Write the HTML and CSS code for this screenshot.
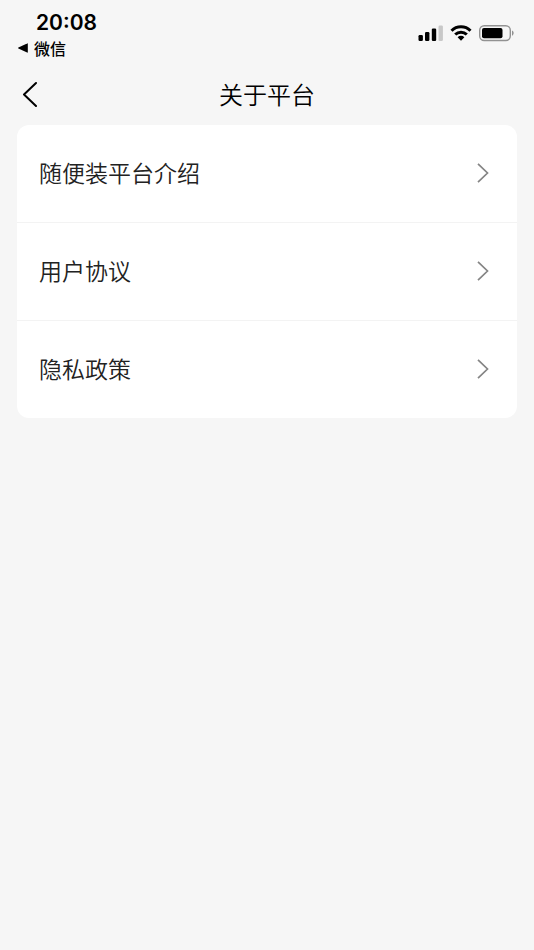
FILE: index.html
```html
<!DOCTYPE html>
<html lang="zh-CN">
<head>
<meta charset="utf-8">
<meta name="viewport" content="width=device-width, initial-scale=1">
<title>关于平台</title>
<link rel="stylesheet" href="styles.css">
</head>
<body>
<div class="status">
  <div class="status-left">
    <time class="clock">20:08</time>
    <a class="return" href="#"><svg width="10" height="10" viewBox="0 0 10 10" aria-hidden="true"><path d="M9.800.8v8.400a.5.5 0 0 1-.7.4L.4 5.400a.5.5 0 0 1 0-.8L9.100.4a.5.5 0 0 1 .7.4z"/></svg>微信</a>
  </div>
  <div class="status-icons">
    <svg width="26" height="18" viewBox="0 0 26 18" aria-hidden="true">
      <rect x=".5" y="11" width="4.400" height="6" rx="1.200"/>
      <rect x="7" y="8" width="4.400" height="9" rx="1.200"/>
      <rect x="13.800" y="4.500" width="4.400" height="12.500" rx="1.200"/>
      <rect x="20.500" y="1.500" width="4.400" height="15.500" rx="1.200" fill="#c8c8c8"/>
    </svg>
    <svg width="22" height="18" viewBox="0 0 22 18" fill="none" stroke="#000" stroke-width="3" aria-hidden="true">
      <path d="M1.500 6.700a13.600 13.600 0 0 1 19 0"/>
      <path d="M5.200 10.500a8.300 8.300 0 0 1 11.600 0"/>
      <path d="M7.600 13.200a4.900 4.900 0 0 1 6.800 0L11 16.700z" fill="#000" stroke="none"/>
    </svg>
    <svg width="36" height="18" viewBox="0 0 36 18" aria-hidden="true">
      <rect x="1.700" y="1.700" width="30.600" height="14.800" rx="4.500" fill="none" stroke="#929292" stroke-width="1.400"/>
      <rect x="4" y="4" width="20.500" height="10.200" rx="2"/>
      <path d="M34 6.500c2.200.8 2.200 4.400 0 5.200z" fill="#929292"/>
    </svg>
  </div>
</div>
<header class="nav">
  <button class="back" type="button" aria-label="返回"><svg width="16" height="26" viewBox="0 0 16 26" aria-hidden="true"><path d="M14 2 2 13.500l12 11.500"/></svg></button>
  <h1 class="title">关于平台</h1>
</header>
<main>
  <nav class="card">
    <a class="row" href="#">随便装平台介绍<svg class="chevron" width="12" height="20" viewBox="0 0 12 20" aria-hidden="true"><path d="M1 .8 10.500 10 1 19.200"/></svg></a>
    <a class="row" href="#">用户协议<svg class="chevron" width="12" height="20" viewBox="0 0 12 20" aria-hidden="true"><path d="M1 .8 10.500 10 1 19.200"/></svg></a>
    <a class="row" href="#">隐私政策<svg class="chevron" width="12" height="20" viewBox="0 0 12 20" aria-hidden="true"><path d="M1 .8 10.500 10 1 19.200"/></svg></a>
  </nav>
</main>
</body>
</html>
```
FILE: styles.css
```css
* {
  box-sizing: border-box;
}

body {
  margin: 0;
  min-height: 100vh;
  background: #f6f6f6;
  color: #000;
  font-family: "Noto Sans CJK SC", sans-serif;
}

a {
  color: inherit;
  text-decoration: none;
}

svg {
  display: block;
  flex: none;
}

.status {
  display: flex;
  justify-content: space-between;
  padding: 10px 20px 0 18px;
}

.clock {
  display: block;
  padding-left: 18px;
  font: 600 21px/26px Inter, sans-serif;
}

.return {
  display: flex;
  align-items: center;
  gap: 6px;
  font-size: 16px;
  font-weight: 500;
  line-height: 24px;
}

.status-icons {
  display: flex;
  gap: 6px;
  padding-top: 14px;
}

.nav {
  display: grid;
  grid-template-columns: 48px 1fr 48px;
  align-items: center;
  padding: 13px 18px 10px;
}

.back {
  width: 48px;
  padding: 8px 4px;
  border: 0;
  background: none;
}

.back path {
  fill: none;
  stroke: #000;
  stroke-width: 2;
  stroke-linecap: round;
  stroke-linejoin: round;
}

.title {
  margin: 0;
  font-size: 24px;
  font-weight: 350;
  line-height: 36px;
  text-align: center;
}

.card {
  margin: 0 17px;
  overflow: hidden;
  border-radius: 12px;
  background: #fff;
}

.row {
  display: flex;
  align-items: center;
  justify-content: space-between;
  padding: 30px 28px 32px 22px;
  color: #222;
  font-size: 23px;
  font-weight: 350;
  line-height: 35px;
}

.row + .row {
  border-top: 1px solid #f3f3f3;
}

.chevron path {
  fill: none;
  stroke: #858585;
  stroke-width: 1.7;
}
```
